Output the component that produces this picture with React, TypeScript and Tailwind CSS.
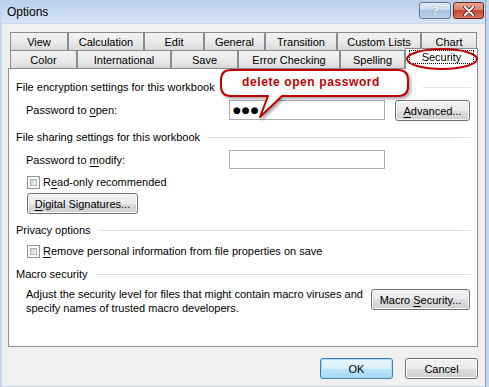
import React from "react";

const font = { fontFamily: '"Liberation Sans", Arial, sans-serif' };

function Tab({ label, w, selected }: { label: string; w: number; selected?: boolean }) {
  if (selected) {
    return (
      <div
        className="h-[21px] bg-white border border-b-0 border-[#898c95] flex items-start justify-center pt-[1px] px-[3px]"
        style={{ width: w }}
      >
        <div className="w-full h-[14px] border border-dotted border-black flex items-center justify-center text-[11px] leading-[12px]">
          {label}
        </div>
      </div>
    );
  }
  return (
    <div
      className="h-[18px] border border-b-0 border-[#898c95] bg-gradient-to-b from-[#f2f2f2] via-[#ebebeb] to-[#d9d9d9] flex items-center justify-center text-[11px] leading-[16px] whitespace-nowrap"
      style={{ width: w }}
    >
      {label}
    </div>
  );
}

function Btn({ children, w, def }: { children: React.ReactNode; w: number; def?: boolean }) {
  return (
    <div
      className={
        "h-[21px] rounded-[3px] border flex items-center justify-center text-[11px] leading-[16px] whitespace-nowrap " +
        (def
          ? "border-[#3c7fb1] shadow-[inset_0_0_0_1px_#a8dcf6] bg-[linear-gradient(#eaf6fd_0%,#d9f0fc_50%,#bee6fd_50%,#a7d9f5_100%)]"
          : "border-[#707070] shadow-[inset_0_0_0_1px_#fcfcfc] bg-[linear-gradient(#f2f2f2_0%,#ebebeb_50%,#dddddd_50%,#cfcfcf_100%)]")
      }
      style={{ width: w }}
    >
      {children}
    </div>
  );
}

function Check() {
  return (
    <div className="w-[13px] h-[13px] border border-[#8e8f8f] bg-white p-[2px] shrink-0">
      <div className="w-full h-full bg-gradient-to-br from-[#cbcfd5] to-[#f6f6f6] border border-[#aeb3b9]" />
    </div>
  );
}

function Heading({ children, padRight }: { children: React.ReactNode; padRight?: boolean }) {
  return (
    <div className="flex items-center pl-[7px] pr-[6px] h-[16px]">
      <span className={"text-[11px] leading-[16px] whitespace-nowrap" + (padRight ? " pr-[200px]" : "")}>{children}</span>
      <div className="flex-1 h-px bg-[#dde3ea] ml-[8px]" />
    </div>
  );
}

export default function App() {
  return (
    <div
      className="relative w-[489px] h-[387px] overflow-hidden bg-[#f0f0f0] text-black"
      style={font}
    >
      <div className="absolute inset-0 border-l-[2px] border-b-[1px] border-r-[3px] border-[#c3d5ec] pointer-events-none z-30" />
      <div className="absolute top-0 bottom-0 right-[3px] w-px bg-[#8d9cb0] z-30" />
      {/* Title bar */}
      <div className="h-[24px] flex items-center justify-between bg-gradient-to-b from-[#b8cfe9] to-[#d7e5f5] border-b border-[#c8d8ea] pl-[7px] pr-[5px]">
        <span className="text-[12px] leading-[18px]">Options</span>
        <div className="flex items-center gap-[2px] -mt-[2px]">
          <div className="w-[32px] h-[17px] rounded-[3px] border border-[#5e7896] bg-[linear-gradient(#e4edf7_0%,#c8d8ec_50%,#aac2e0_50%,#bed2ea_100%)] flex items-center justify-center text-[12px] font-bold text-white [text-shadow:0_0_1px_#304a6b]">
            ?
          </div>
          <div className="w-[31px] h-[17px] rounded-[3px] border border-[#6d2418] bg-[linear-gradient(#e7a393_0%,#d7826f_50%,#c24a33_50%,#d4725a_100%)] flex items-center justify-center">
            <svg width="12" height="10" viewBox="0 0 12 10">
              <path d="M2 1 L10 9 M10 1 L2 9" stroke="#3a1410" strokeWidth="3.4" strokeLinecap="round" />
              <path d="M2 1 L10 9 M10 1 L2 9" stroke="#ffffff" strokeWidth="2" strokeLinecap="round" />
            </svg>
          </div>
        </div>
      </div>

      {/* Tabs */}
      <div className="ml-[10px] mt-[8px] flex">
        <Tab label="View" w={58} />
        <Tab label="Calculation" w={76} />
        <Tab label="Edit" w={60} />
        <Tab label="General" w={61} />
        <Tab label="Transition" w={72} />
        <Tab label="Custom Lists" w={84} />
        <Tab label="Chart" w={56} />
      </div>
      <div className="ml-[10px] -mt-[2px] flex items-end h-[21px] relative z-10 -mb-[1px]">
        <div className="flex mb-[1px]">
          <Tab label="Color" w={67} />
          <Tab label="International" w={94} />
          <Tab label="Save" w={67} />
          <Tab label="Error Checking" w={102} />
          <Tab label="Spelling" w={65} />
        </div>
        <Tab label="Security" w={73} selected />
      </div>

      {/* Panel */}
      <div className="ml-[8px] w-[470px] h-[279px] bg-white border border-[#898c95] pt-[10px] text-[11px] leading-[16px]">
        <Heading padRight>File encryption settings for this workbook</Heading>
        <div className="mt-[3px] flex items-center h-[23px] pl-[17px]">
          <span className="w-[203px]">
            Password to <u className="underline-offset-2">o</u>pen:
          </span>
          <div className="w-[156px] h-[20px] border border-[#abadb3] bg-white flex items-center pl-[3px]">
            <span className="text-[9px] leading-[10px] tracking-[1px]" style={{ fontFamily: '"DejaVu Sans", sans-serif' }}>●●●</span>
          </div>
          <div className="ml-[10px] mt-[2px]">
            <Btn w={75}>
              <span><u className="underline-offset-2">A</u>dvanced...</span>
            </Btn>
          </div>
        </div>
        <div className="mt-[8px]">
          <Heading>File sharing settings for this workbook</Heading>
        </div>
        <div className="mt-[5px] flex items-center h-[19px] pl-[17px]">
          <span className="w-[203px]">
            Password to <u className="underline-offset-2">m</u>odify:
          </span>
          <div className="w-[156px] h-[19px] border border-[#abadb3] bg-white" />
        </div>
        <div className="mt-[5px] flex items-center h-[16px] pl-[18px] gap-[3px]">
          <Check />
          <span>
            R<u className="underline-offset-2">e</u>ad-only recommended
          </span>
        </div>
        <div className="mt-[3px] pl-[18px]">
          <Btn w={111}>
            <span><u className="underline-offset-2">D</u>igital Signatures...</span>
          </Btn>
        </div>
        <div className="mt-[8px]">
          <Heading>Privacy options</Heading>
        </div>
        <div className="mt-[5px] flex items-center h-[16px] pl-[18px] gap-[3px]">
          <Check />
          <span className="whitespace-nowrap">
            <u className="underline-offset-2">R</u>emove personal information from file properties on save
          </span>
        </div>
        <div className="mt-[7px]">
          <Heading>Macro security</Heading>
        </div>
        <div className="mt-[5px] flex items-start pl-[17px]">
          <div className="w-[345px] leading-[14px]">
            Adjust the security level for files that might contain macro viruses and specify names of trusted macro developers.
          </div>
          <div className="mt-[2px]">
            <Btn w={99}>
              <span>Macro <u className="underline-offset-2">S</u>ecurity...</span>
            </Btn>
          </div>
        </div>
      </div>

      {/* Footer */}
      <div className="mt-[11px] flex justify-end gap-[12px] pr-[11px]">
        <Btn w={73} def>OK</Btn>
        <Btn w={73}>Cancel</Btn>
      </div>

      {/* Annotations */}
      <svg className="absolute left-0 top-0 z-20 pointer-events-none" width="489" height="387">
        <defs>
          <filter id="sh" x="-10%" y="-20%" width="130%" height="160%">
            <feDropShadow dx="2" dy="2" stdDeviation="1.5" floodColor="#000" floodOpacity="0.35" />
          </filter>
        </defs>
        <path
          d="M231 70 H398 Q408 70 408 80 V86 Q408 96 398 96 H282 L260 117 L268 96 H231 Q221 96 221 86 V80 Q221 70 231 70 Z"
          fill="#ffffff"
          stroke="#c00000"
          strokeWidth="2"
          strokeLinejoin="round"
          filter="url(#sh)"
        />
        <ellipse cx="442" cy="59" rx="35" ry="10" fill="none" stroke="#c00000" strokeWidth="2" />
      </svg>
      <div
        className="absolute left-[242px] top-[74px] z-20 text-[12px] leading-[16px] font-bold text-[#c00000] tracking-[0.6px]"
        style={{ fontFamily: '"Liberation Sans", Arial, sans-serif' }}
      >
        delete open password
      </div>
    </div>
  );
}
